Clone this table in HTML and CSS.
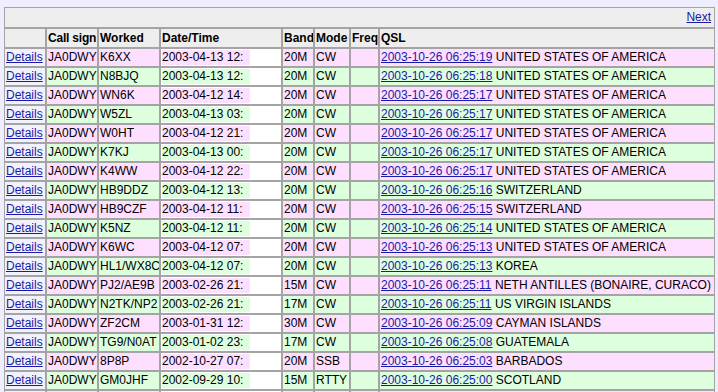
FILE: index.html
```html
<!DOCTYPE html>
<html>
<head>
<meta charset="utf-8">
<link rel="stylesheet" href="styles.css">
</head>
<body>
<div class="page">
<table class="log">
<colgroup>
<col class="c-det"><col class="c-call"><col class="c-work"><col class="c-date"><col class="c-band"><col class="c-mode"><col class="c-freq"><col class="c-qsl">
</colgroup>
<tr class="nav"><td colspan="8"><a href="#">Next</a></td></tr>
<tr class="head"><th></th><th>Call sign</th><th>Worked</th><th>Date/Time</th><th>Band</th><th>Mode</th><th>Freq</th><th>QSL</th></tr>
<tr class="pink"><td class="det"><a href="#">Details</a></td><td>JA0DWY</td><td>K6XX</td><td class="date"><div>2003-04-13 12:</div></td><td>20M</td><td>CW</td><td></td><td><a href="#">2003-10-26 06:25:19</a> UNITED STATES OF AMERICA</td></tr>
<tr class="green"><td class="det"><a href="#">Details</a></td><td>JA0DWY</td><td>N8BJQ</td><td class="date"><div>2003-04-13 12:</div></td><td>20M</td><td>CW</td><td></td><td><a href="#">2003-10-26 06:25:18</a> UNITED STATES OF AMERICA</td></tr>
<tr class="pink"><td class="det"><a href="#">Details</a></td><td>JA0DWY</td><td>WN6K</td><td class="date"><div>2003-04-12 14:</div></td><td>20M</td><td>CW</td><td></td><td><a href="#">2003-10-26 06:25:17</a> UNITED STATES OF AMERICA</td></tr>
<tr class="green"><td class="det"><a href="#">Details</a></td><td>JA0DWY</td><td>W5ZL</td><td class="date"><div>2003-04-13 03:</div></td><td>20M</td><td>CW</td><td></td><td><a href="#">2003-10-26 06:25:17</a> UNITED STATES OF AMERICA</td></tr>
<tr class="pink"><td class="det"><a href="#">Details</a></td><td>JA0DWY</td><td>W0HT</td><td class="date"><div>2003-04-12 21:</div></td><td>20M</td><td>CW</td><td></td><td><a href="#">2003-10-26 06:25:17</a> UNITED STATES OF AMERICA</td></tr>
<tr class="green"><td class="det"><a href="#">Details</a></td><td>JA0DWY</td><td>K7KJ</td><td class="date"><div>2003-04-13 00:</div></td><td>20M</td><td>CW</td><td></td><td><a href="#">2003-10-26 06:25:17</a> UNITED STATES OF AMERICA</td></tr>
<tr class="pink"><td class="det"><a href="#">Details</a></td><td>JA0DWY</td><td>K4WW</td><td class="date"><div>2003-04-12 22:</div></td><td>20M</td><td>CW</td><td></td><td><a href="#">2003-10-26 06:25:17</a> UNITED STATES OF AMERICA</td></tr>
<tr class="green"><td class="det"><a href="#">Details</a></td><td>JA0DWY</td><td>HB9DDZ</td><td class="date"><div>2003-04-12 13:</div></td><td>20M</td><td>CW</td><td></td><td><a href="#">2003-10-26 06:25:16</a> SWITZERLAND</td></tr>
<tr class="pink"><td class="det"><a href="#">Details</a></td><td>JA0DWY</td><td>HB9CZF</td><td class="date"><div>2003-04-12 11:</div></td><td>20M</td><td>CW</td><td></td><td><a href="#">2003-10-26 06:25:15</a> SWITZERLAND</td></tr>
<tr class="green"><td class="det"><a href="#">Details</a></td><td>JA0DWY</td><td>K5NZ</td><td class="date"><div>2003-04-12 11:</div></td><td>20M</td><td>CW</td><td></td><td><a href="#">2003-10-26 06:25:14</a> UNITED STATES OF AMERICA</td></tr>
<tr class="pink"><td class="det"><a href="#">Details</a></td><td>JA0DWY</td><td>K6WC</td><td class="date"><div>2003-04-12 07:</div></td><td>20M</td><td>CW</td><td></td><td><a href="#">2003-10-26 06:25:13</a> UNITED STATES OF AMERICA</td></tr>
<tr class="green"><td class="det"><a href="#">Details</a></td><td>JA0DWY</td><td>HL1/WX8C</td><td class="date"><div>2003-04-12 07:</div></td><td>20M</td><td>CW</td><td></td><td><a href="#">2003-10-26 06:25:13</a> KOREA</td></tr>
<tr class="pink"><td class="det"><a href="#">Details</a></td><td>JA0DWY</td><td>PJ2/AE9B</td><td class="date"><div>2003-02-26 21:</div></td><td>15M</td><td>CW</td><td></td><td><a href="#">2003-10-26 06:25:11</a> NETH ANTILLES (BONAIRE, CURACO)</td></tr>
<tr class="green"><td class="det"><a href="#">Details</a></td><td>JA0DWY</td><td>N2TK/NP2</td><td class="date"><div>2003-02-26 21:</div></td><td>17M</td><td>CW</td><td></td><td><a href="#">2003-10-26 06:25:11</a> US VIRGIN ISLANDS</td></tr>
<tr class="pink"><td class="det"><a href="#">Details</a></td><td>JA0DWY</td><td>ZF2CM</td><td class="date"><div>2003-01-31 12:</div></td><td>30M</td><td>CW</td><td></td><td><a href="#">2003-10-26 06:25:09</a> CAYMAN ISLANDS</td></tr>
<tr class="green"><td class="det"><a href="#">Details</a></td><td>JA0DWY</td><td>TG9/N0AT</td><td class="date"><div>2003-01-02 23:</div></td><td>17M</td><td>CW</td><td></td><td><a href="#">2003-10-26 06:25:08</a> GUATEMALA</td></tr>
<tr class="pink"><td class="det"><a href="#">Details</a></td><td>JA0DWY</td><td>8P8P</td><td class="date"><div>2002-10-27 07:</div></td><td>20M</td><td>SSB</td><td></td><td><a href="#">2003-10-26 06:25:03</a> BARBADOS</td></tr>
<tr class="green"><td class="det"><a href="#">Details</a></td><td>JA0DWY</td><td>GM0JHF</td><td class="date"><div>2002-09-29 10:</div></td><td>15M</td><td>RTTY</td><td></td><td><a href="#">2003-10-26 06:25:00</a> SCOTLAND</td></tr>
<tr class="pink"><td class="det"><a href="#">Details</a></td><td>JA0DWY</td><td>VP2V</td><td class="date"><div>2002-09-28 18:</div></td><td>20M</td><td>CW</td><td></td><td><a href="#">2003-10-26 06:24:58</a> BRITISH VIRGIN ISLANDS</td></tr>
</table>
</div>
</body>
</html>
```

FILE: styles.css
```css
html, body {
  margin: 0;
  padding: 0;
  background: #eeeeff;
  overflow: hidden;
}
.page {
  padding: 7px 0 0 4px;
  font-family: "Liberation Sans", Arial, sans-serif;
  font-size: 12px;
  color: #000;
}
.log {
  border-collapse: separate;
  border-spacing: 0;
  table-layout: fixed;
  width: 711px;
}
.c-det { width: 42px; }
.c-call { width: 52px; }
.c-work { width: 62px; }
.c-date { width: 122px; }
.c-band { width: 32px; }
.c-mode { width: 36px; }
.c-freq { width: 29px; }
.c-qsl { width: 336px; }
.log td, .log th {
  border: 1px solid #a4a4a4;
  padding: 1px 1px;
  height: 15px;
  line-height: 15px;
  text-align: left;
  vertical-align: middle;
  white-space: nowrap;
  overflow: hidden;
}
.log th {
  font-weight: bold;
  background: #eeeeee;
  height: 16px;
  line-height: 16px;
}
.log th:nth-child(2) { letter-spacing: -0.2px; }
.nav td {
  background: #eeeeee;
  text-align: right;
  height: 17px;
  line-height: 17px;
  padding: 1px 3px 1px 1px;
}
a {
  color: #1a1aa8;
  text-decoration: underline;
}
.pink td { background: #ffdfff; }
.green td { background: #ddffdd; }
.log td.det { background: #f2f2ff; }
.log td.date { background: #ffffff; }
.date div {
  width: 88px;
  overflow: hidden;
  white-space: nowrap;
}
.pink .date div { background: #ffdfff; }
.green .date div { background: #ddffdd; }
```
